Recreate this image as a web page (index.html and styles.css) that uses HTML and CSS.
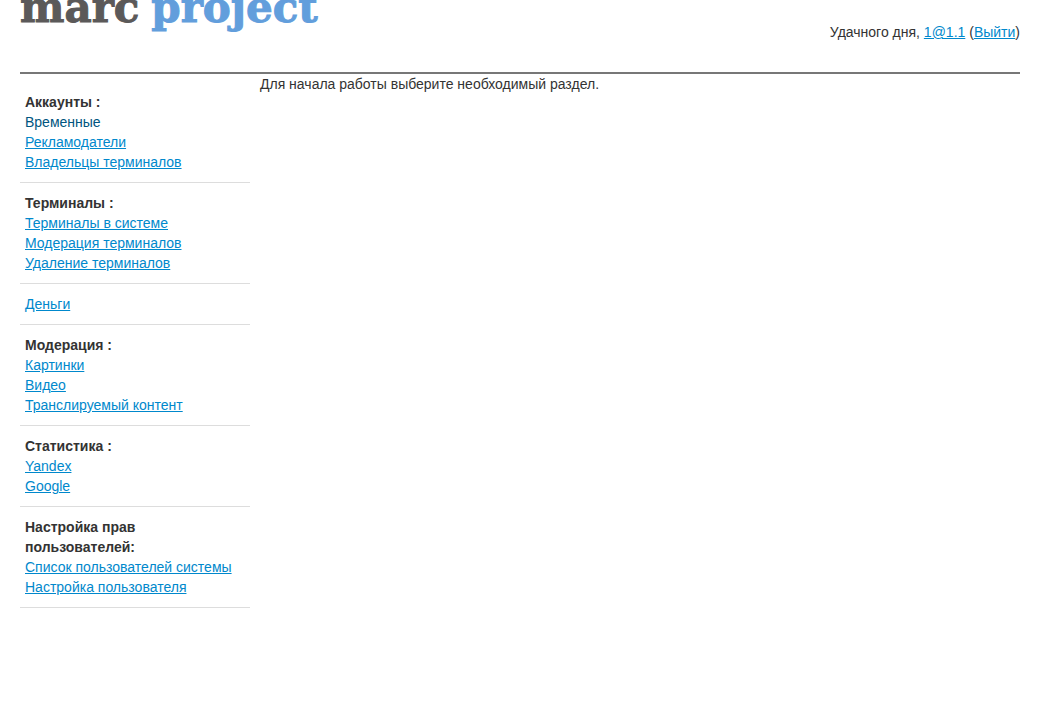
FILE: index.html
```html
<!DOCTYPE html>
<html lang="ru">
<head>
<meta charset="utf-8">
<title>marc project</title>
<link rel="stylesheet" href="styles.css">
</head>
<body>
<header class="header">
  <div class="logo"><span>marc</span> <span class="logo-accent">project</span></div>
  <div class="greeting">Удачного дня, <a href="#profile">1@1.1</a> (<a href="#logout">Выйти</a>)</div>
</header>
<div class="layout">
  <nav class="sidebar">
    <section class="group">
      <h2 class="group-title">Аккаунты :</h2>
      <a class="current" href="#temporary">Временные</a>
      <a href="#advertisers">Рекламодатели</a>
      <a href="#owners">Владельцы терминалов</a>
    </section>
    <section class="group">
      <h2 class="group-title">Терминалы :</h2>
      <a href="#terminals">Терминалы в системе</a>
      <a href="#terminals-moderation">Модерация терминалов</a>
      <a href="#terminals-removal">Удаление терминалов</a>
    </section>
    <section class="group">
      <a href="#money">Деньги</a>
    </section>
    <section class="group">
      <h2 class="group-title">Модерация :</h2>
      <a href="#images">Картинки</a>
      <a href="#video">Видео</a>
      <a href="#content">Транслируемый контент</a>
    </section>
    <section class="group">
      <h2 class="group-title">Статистика :</h2>
      <a href="#yandex">Yandex</a>
      <a href="#google">Google</a>
    </section>
    <section class="group">
      <h2 class="group-title">Настройка прав пользователей:</h2>
      <a href="#users">Список пользователей системы</a>
      <a href="#user-settings">Настройка пользователя</a>
    </section>
  </nav>
  <main class="content">Для начала работы выберите необходимый раздел.</main>
</div>
</body>
</html>
```
FILE: styles.css
```css
body {
  margin: 0 20px;
  background: #fff;
  color: #333;
  font: 14px/20px "Liberation Sans", Arial, sans-serif;
}

a {
  color: #08c;
  text-decoration: underline;
}

.header {
  display: flex;
  justify-content: space-between;
  align-items: flex-start;
  border-bottom: 2px solid #777;
}

.logo {
  display: flex;
  gap: 12px;
  color: #5b5959;
  font: bold 42px/16px "DejaVu Serif", serif;
  -webkit-text-stroke: 1px currentColor;
}

.logo-accent {
  color: #629edc;
}

.greeting {
  padding: 22px 0 30px;
}

.layout {
  display: flex;
  gap: 10px;
}

.sidebar {
  flex: 0 0 230px;
  padding-top: 8px;
}

.group {
  display: flex;
  flex-direction: column;
  align-items: flex-start;
  padding: 10px 5px;
  border-bottom: 1px solid #ddd;
}

.group-title {
  margin: 0;
  font-size: 14px;
  line-height: 20px;
}

.current {
  color: #005580;
  text-decoration: none;
}

.content {
  flex: 1;
}
```
